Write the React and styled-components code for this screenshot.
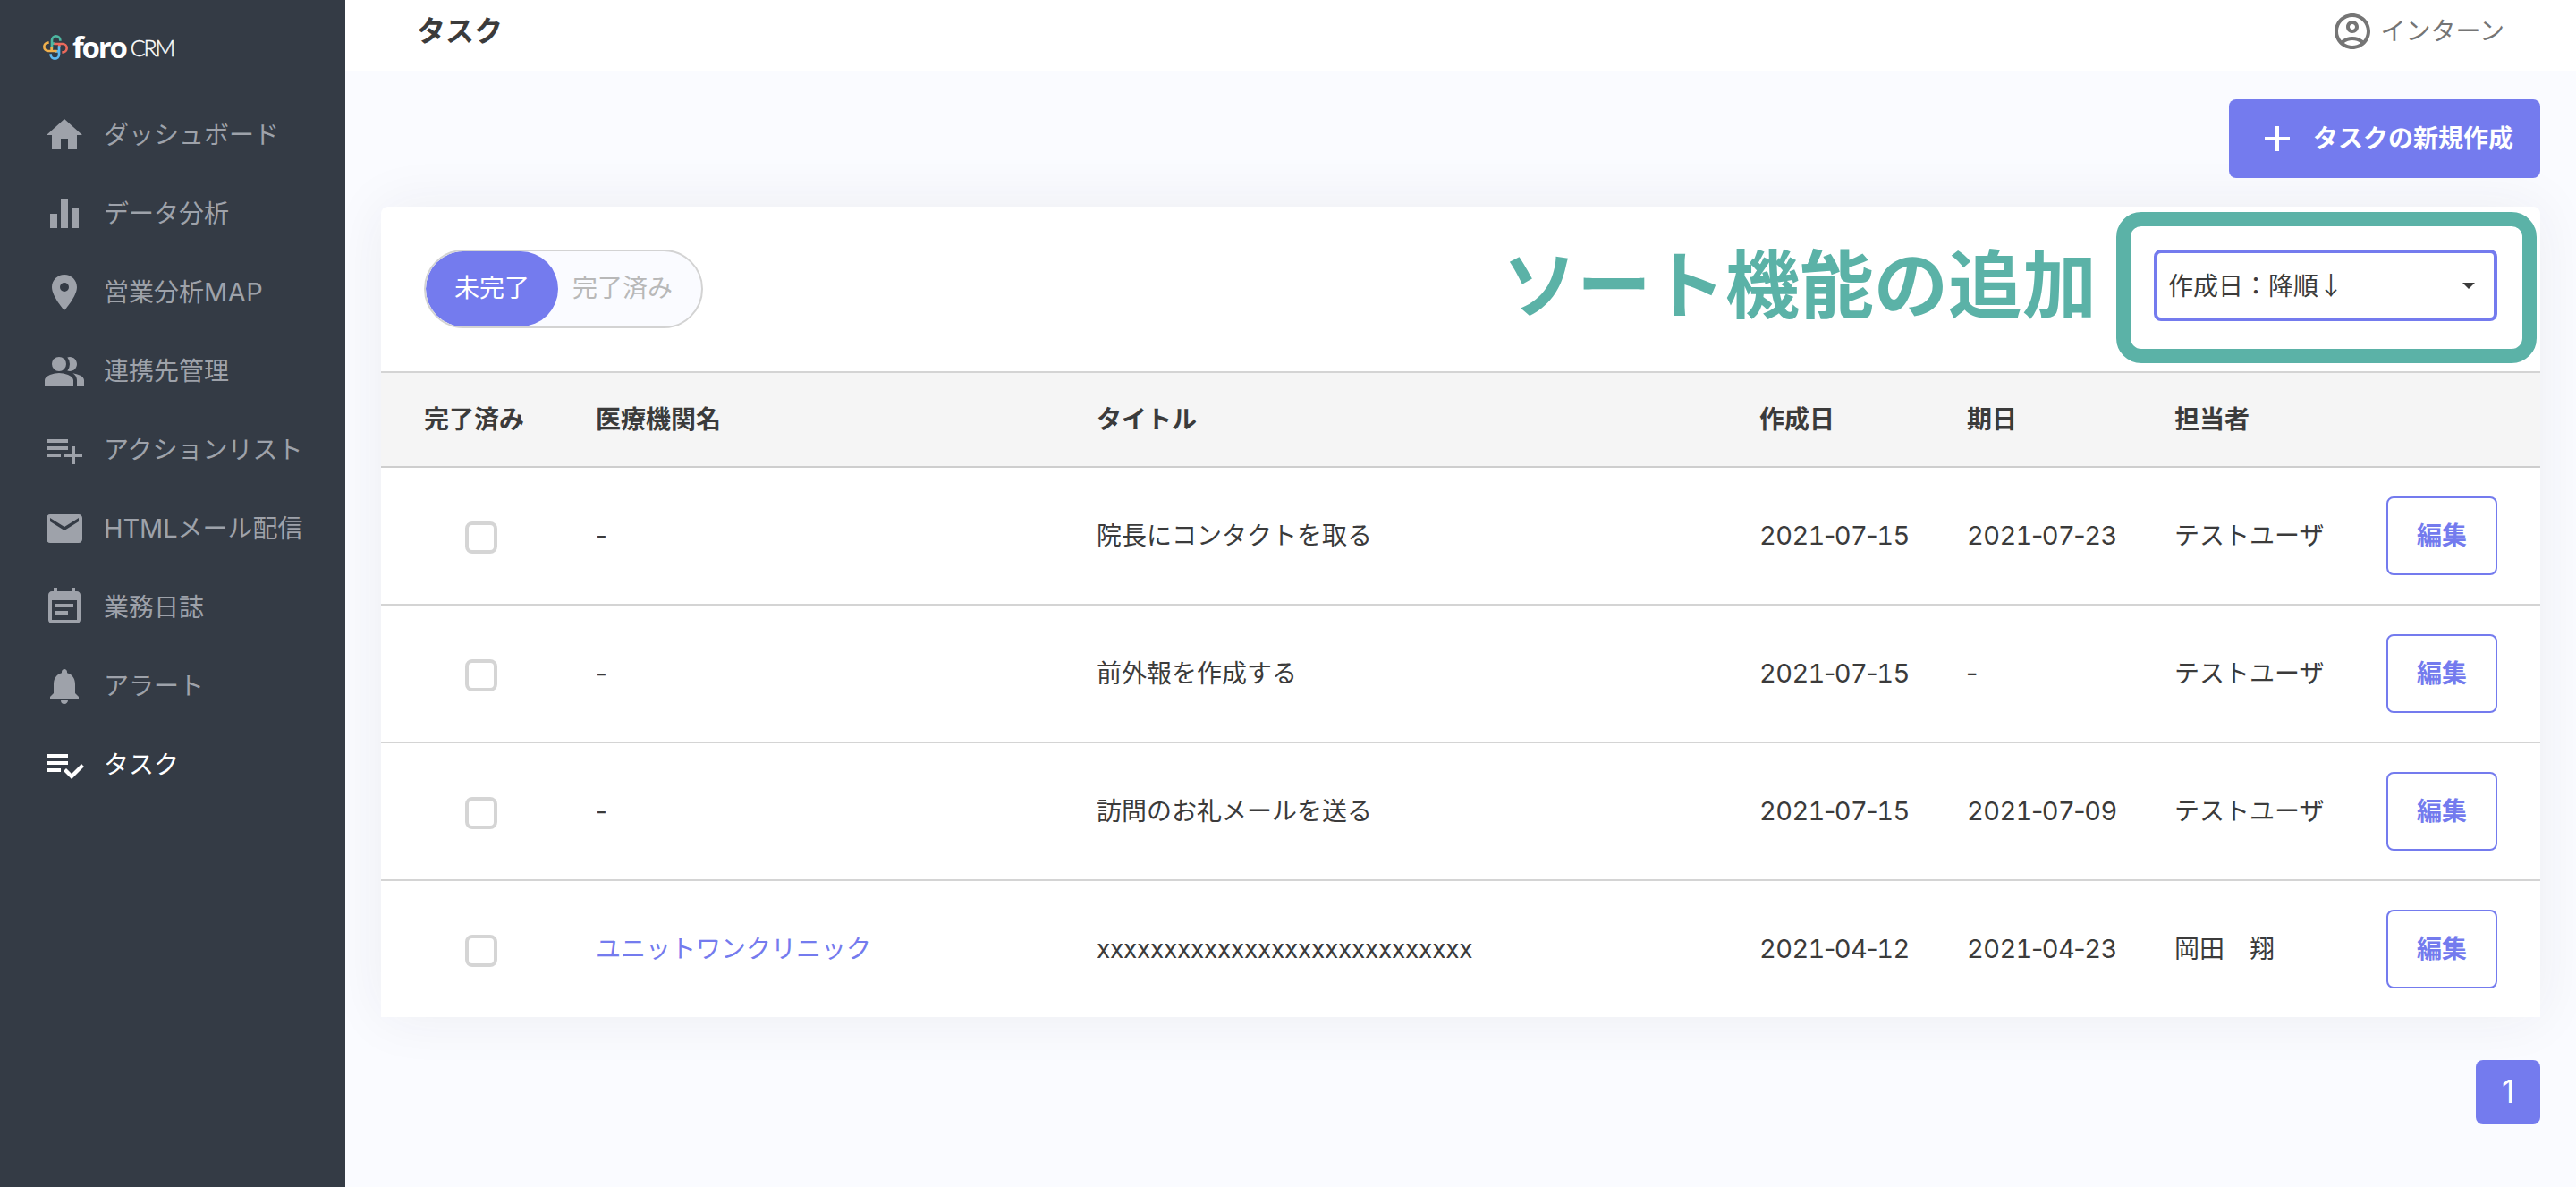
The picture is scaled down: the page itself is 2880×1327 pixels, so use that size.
import React from "react";
import styled, { createGlobalStyle } from "styled-components";
import {
  MdHome,
  MdPlace,
  MdPeopleAlt,
  MdEmail,
  MdNotifications,
  MdOutlineAccountCircle,
  MdAdd,
} from "react-icons/md";

const GlobalStyle = createGlobalStyle`
  * {
    box-sizing: border-box;
  }
  body {
    margin: 0;
    background: #fafbff;
    color: #3b3b3b;
    font-family: Inter, "Noto Sans CJK JP", sans-serif;
    font-size: 28px;
    line-height: 40px;
  }
`;

const Page = styled.div`
  display: flex;
  height: 1327px;
  overflow: hidden;
`;

const Sidebar = styled.nav`
  flex: none;
  width: 386px;
  padding-top: 36px;
  background: #343b45;
  z-index: 1;
`;

const Logo = styled.div`
  display: flex;
  align-items: center;
  height: 34px;
  margin: 0 0 37px 48px;
  color: #fff;
  svg {
    width: 28px;
    height: 28px;
    margin-right: 5px;
  }
`;

const LogoName = styled.span`
  font: 700 33px/34px "Open Sans", sans-serif;
  letter-spacing: -2.2px;
`;

const LogoSuffix = styled.span`
  margin-left: 5px;
  font: 300 25px/34px Lato, sans-serif;
  letter-spacing: -2.2px;
  -webkit-text-stroke: 0.4px #fff;
`;

const NavItem = styled.a`
  display: flex;
  align-items: center;
  height: 88px;
  padding-left: 48px;
  gap: 20px;
  color: ${({ $active }) => ($active ? "#fff" : "#9ea2aa")};
  svg {
    width: 48px;
    height: 48px;
    fill: currentColor;
  }
`;

const Latin = styled.span`
  font-size: 29px;
  letter-spacing: ${({ $spacing }) => $spacing || "0"};
`;

const Main = styled.div`
  flex: 1;
  min-width: 0;
`;

const Header = styled.header`
  display: flex;
  justify-content: space-between;
  height: 79px;
  padding: 11px 80px 0 80px;
  background: #fff;
`;

const PageTitle = styled.h1`
  margin: 0;
  font-size: 32px;
  line-height: 48px;
`;

const User = styled.div`
  display: flex;
  align-items: center;
  height: 48px;
  gap: 7px;
  color: #757575;
  svg {
    width: 48px;
    height: 48px;
  }
`;

const Content = styled.main`
  display: flex;
  flex-direction: column;
  align-items: flex-end;
  padding: 32px 40px 0;
`;

const CreateButton = styled.button`
  display: flex;
  align-items: center;
  gap: 16px;
  height: 88px;
  padding: 0 30px;
  border: 0;
  border-radius: 8px;
  background: #747bee;
  color: #fff;
  font: inherit;
  font-weight: 700;
  z-index: 1;
  svg {
    width: 48px;
    height: 48px;
  }
`;

const Card = styled.section`
  width: 100%;
  margin: 32px 0 48px;
  border-radius: 8px 8px 0 0;
  background: #fff;
  box-shadow: 0 0 64px rgba(40, 40, 60, 0.065);
`;

const Toolbar = styled.div`
  display: flex;
  align-items: flex-start;
  justify-content: space-between;
  padding: 48px;
`;

const Toggle = styled.div`
  display: flex;
  height: 88px;
  border: 2px solid #d3d3d3;
  border-radius: 44px;
  background: #fafbff;
  overflow: hidden;
`;

const ToggleOption = styled.div`
  padding: 0 32px 0 ${({ $active }) => ($active ? "32px" : "16px")};
  border-radius: 42px;
  background: ${({ $active }) => ($active ? "#747bee" : "transparent")};
  color: ${({ $active }) => ($active ? "#fff" : "#b8b8b8")};
  line-height: 83px;
`;

const SortArea = styled.div`
  position: relative;
`;

const Select = styled.div`
  display: flex;
  align-items: center;
  justify-content: space-between;
  width: 384px;
  height: 80px;
  padding: 0 21px 0 12px;
  border: 4px solid #747bee;
  border-radius: 8px;
  font-family: "Noto Sans CJK JP", sans-serif;
  line-height: 38px;
  svg {
    width: 14px;
    height: 7px;
    fill: #3b3b3b;
  }
`;

const SelectValue = styled.span`
  padding-bottom: 3px;
`;

const Highlight = styled.div`
  position: absolute;
  inset: -42px -44px -47px -42px;
  border: 16px solid #5bb2a7;
  border-radius: 28px;
`;

const Callout = styled.div`
  position: absolute;
  right: 448px;
  top: -20px;
  color: #5bb2a7;
  font-size: 83px;
  font-weight: 700;
  line-height: 120px;
  white-space: nowrap;
`;

const Row = styled.div`
  display: grid;
  grid-template-columns: 128px 496px 1fr 168px 168px 173px 124px;
  column-gap: 64px;
  align-items: center;
  height: 154px;
  padding: 0 48px;
  border-bottom: 2px solid #d4d4d4;
  white-space: nowrap;
  &:last-child {
    height: 152px;
    border-bottom: 0;
  }
`;

const HeadRow = styled(Row)`
  height: 108px;
  border-top: 2px solid #d4d4d4;
  border-bottom-color: #cecece;
  background: #f5f5f5;
  font-weight: 700;
`;

const Checkbox = styled.span`
  justify-self: center;
  width: 36px;
  height: 36px;
  margin-top: 4px;
  border: 4px solid #d5d5d5;
  border-radius: 8px;
`;

const Link = styled.a`
  color: #747bee;
`;

const TaskTitle = styled.span`
  letter-spacing: ${({ $tight }) => ($tight ? "-0.28px" : "0")};
`;

const DateText = styled.span`
  font-size: 29px;
  font-variant-numeric: tabular-nums;
  letter-spacing: -0.6px;
`;

const Hyphen = styled.span`
  margin: 0 -0.9px;
  font-variant-numeric: normal;
`;

const EditButton = styled.button`
  height: 88px;
  padding: 0;
  border: 2px solid #747bee;
  border-radius: 8px;
  background: #fff;
  color: #747bee;
  font: inherit;
  font-weight: 700;
`;

const PageNumber = styled.div`
  width: 72px;
  height: 72px;
  border-radius: 8px;
  background: #747bee;
  color: #fff;
  font-size: 35px;
  line-height: 71px;
  text-align: center;
`;

const IconPath = ({ d }) => (
  <svg viewBox="0 0 24 24">
    <path d={d} />
  </svg>
);

const BarsIcon = () => <IconPath d="M4 12h4v8H4zM10 4h4v16h-4zM16 9h4v11h-4z" />;
const ListAddIcon = () => (
  <IconPath d="M14 10H2v2h12v-2zm0-4H2v2h12V6zm4 8v-4h-2v4h-4v2h4v4h2v-4h4v-2h-4zM2 16h8v-2H2v2z" />
);
const ListCheckIcon = () => (
  <IconPath d="M14 10H2v2h12v-2zm0-4H2v2h12V6zM2 16h8v-2H2v2zm19.5-4.5L23 13l-6.99 7-4.51-4.5L13 14l3.01 3 5.49-5.5z" />
);
const JournalIcon = () => (
  <IconPath d="M17 10H7v2h10v-2zm2-7h-1V1h-2v2H8V1H6v2H5c-1.11 0-1.99.9-1.99 2L3 19c0 1.1.89 2 2 2h14c1.1 0 2-.9 2-2V5c0-1.1-.9-2-2-2zm0 16H5V8h14v11zm-5-5H7v2h7v-2z" />
);

const LogoMark = () => (
  <svg viewBox="0 0 84 84" fill="none" strokeWidth="8">
    {["#4db6a0", "#ec6a5c", "#5cb8f0", "#f0b04c"].map((color, i) => (
      <path
        key={color}
        d="M30 47V18A14 14 0 0 1 58 18V20M30 29H42"
        stroke={color}
        transform={`rotate(${i * 90} 42 42)`}
      />
    ))}
  </svg>
);

const DateValue = ({ value }) => (
  <DateText>
    {value.split("-").map((part, i) => (
      <React.Fragment key={i}>
        {i > 0 && <Hyphen>-</Hyphen>}
        {part}
      </React.Fragment>
    ))}
  </DateText>
);

const navItems = [
  { key: "dashboard", label: "ダッシュボード", Icon: MdHome },
  { key: "analysis", label: "データ分析", Icon: BarsIcon },
  {
    key: "map",
    label: (
      <span>
        営業分析<Latin $spacing="0.5px">MAP</Latin>
      </span>
    ),
    Icon: MdPlace,
  },
  { key: "partners", label: "連携先管理", Icon: MdPeopleAlt },
  { key: "actions", label: "アクションリスト", Icon: ListAddIcon },
  {
    key: "mail",
    label: (
      <span>
        <Latin $spacing="-0.1px">HTML</Latin>メール配信
      </span>
    ),
    Icon: MdEmail,
  },
  { key: "journal", label: "業務日誌", Icon: JournalIcon },
  { key: "alerts", label: "アラート", Icon: MdNotifications },
  { key: "tasks", label: "タスク", Icon: ListCheckIcon, active: true },
];

const tasks = [
  { title: "院長にコンタクトを取る", created: "2021-07-15", due: "2021-07-23", user: "テストユーザ" },
  { title: "前外報を作成する", created: "2021-07-15", due: "-", user: "テストユーザ" },
  { title: "訪問のお礼メールを送る", created: "2021-07-15", due: "2021-07-09", user: "テストユーザ" },
  {
    clinic: "ユニットワンクリニック",
    title: "xxxxxxxxxxxxxxxxxxxxxxxxxxxx",
    tight: true,
    created: "2021-04-12",
    due: "2021-04-23",
    user: "岡田　翔",
  },
];

const App = () => (
  <>
    <GlobalStyle />
    <Page>
      <Sidebar>
        <Logo>
          <LogoMark />
          <LogoName>foro</LogoName>
          <LogoSuffix>CRM</LogoSuffix>
        </Logo>
        {navItems.map(({ key, label, Icon, active }) => (
          <NavItem key={key} $active={active}>
            <Icon />
            {label}
          </NavItem>
        ))}
      </Sidebar>
      <Main>
        <Header>
          <PageTitle>タスク</PageTitle>
          <User>
            <MdOutlineAccountCircle />
            インターン
          </User>
        </Header>
        <Content>
          <CreateButton>
            <MdAdd />
            タスクの新規作成
          </CreateButton>
          <Card>
            <Toolbar>
              <Toggle>
                <ToggleOption $active>未完了</ToggleOption>
                <ToggleOption>完了済み</ToggleOption>
              </Toggle>
              <SortArea>
                <Select>
                  <SelectValue>作成日：降順↓</SelectValue>
                  <svg viewBox="0 0 14 7">
                    <path d="M0 0h14L7 7z" />
                  </svg>
                </Select>
                <Highlight />
                <Callout>ソート機能の追加</Callout>
              </SortArea>
            </Toolbar>
            <HeadRow>
              <span>完了済み</span>
              <span>医療機関名</span>
              <span>タイトル</span>
              <span>作成日</span>
              <span>期日</span>
              <span>担当者</span>
            </HeadRow>
            {tasks.map((task) => (
              <Row key={task.title}>
                <Checkbox />
                {task.clinic ? <Link>{task.clinic}</Link> : <span>-</span>}
                <TaskTitle $tight={task.tight}>{task.title}</TaskTitle>
                <DateValue value={task.created} />
                <DateValue value={task.due} />
                <span>{task.user}</span>
                <EditButton>編集</EditButton>
              </Row>
            ))}
          </Card>
          <PageNumber>1</PageNumber>
        </Content>
      </Main>
    </Page>
  </>
);

export default App;
